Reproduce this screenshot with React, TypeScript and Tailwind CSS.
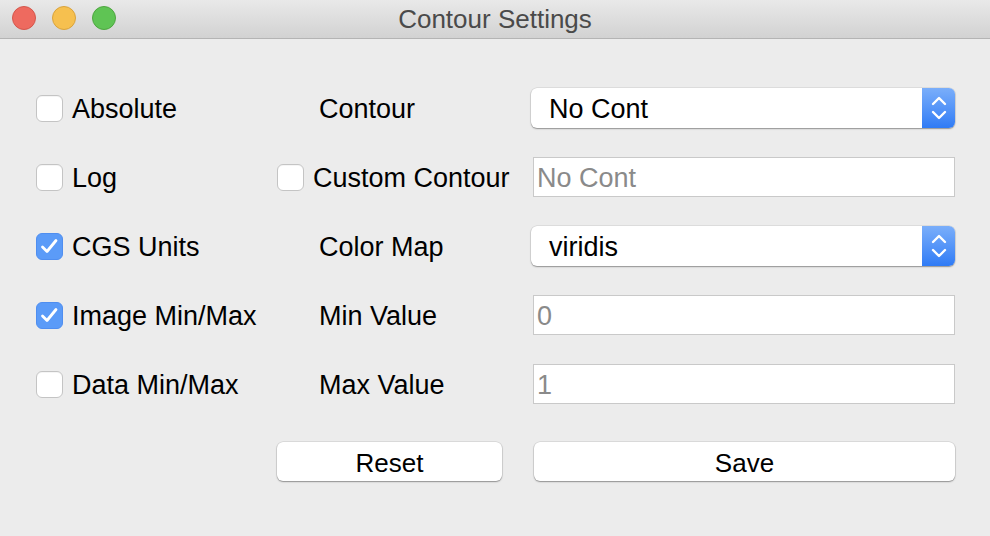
import React from 'react';

const font = { fontFamily: '"Liberation Sans", Arial, sans-serif' };

const Checkbox = ({ checked }: { checked?: boolean }) =>
  checked ? (
    <div className="w-[27px] h-[27px] rounded-[6px] bg-[#5b9bf8] border border-[#4f8ef0] flex items-center justify-center shrink-0">
      <svg width="21" height="21" viewBox="0 0 21 21" fill="none">
        <polyline points="3.5,11 8,15.5 17,4.5" stroke="white" strokeWidth="2.8" strokeLinecap="round" strokeLinejoin="round" />
      </svg>
    </div>
  ) : (
    <div className="w-[27px] h-[27px] rounded-[6px] bg-white border border-[#c4c4c4] shadow-[inset_0_1px_0_rgba(0,0,0,0.04)] shrink-0" />
  );

const CheckRow = ({ label, checked }: { label: string; checked?: boolean }) => (
  <div className="flex items-center gap-[9px] h-[40px]">
    <Checkbox checked={checked} />
    <span className="text-[27px] text-black leading-none pt-[2px]">{label}</span>
  </div>
);

const Label = ({ text }: { text: string }) => (
  <div className="flex items-center pl-[42px] pt-[2px] text-[27px] text-black leading-none">{text}</div>
);

const Select = ({ value }: { value: string }) => (
  <div className="h-[40px] w-[424px] flex rounded-[6px] bg-white shadow-[0_1px_1.5px_rgba(0,0,0,0.35),0_0_0_0.5px_rgba(0,0,0,0.12)] overflow-hidden">
    <div className="flex-1 flex items-center pl-[18px] pt-[2px] text-[27px] text-black leading-none">{value}</div>
    <div className="w-[33px] h-full bg-gradient-to-b from-[#7aaefa] to-[#2f7bf5] flex items-center justify-center">
      <svg width="18" height="28" viewBox="0 0 18 28" fill="none">
        <polyline points="3,10 9,4 15,10" stroke="white" strokeWidth="2.4" strokeLinecap="round" strokeLinejoin="round" />
        <polyline points="3,18 9,24 15,18" stroke="white" strokeWidth="2.4" strokeLinecap="round" strokeLinejoin="round" />
      </svg>
    </div>
  </div>
);

const TextField = ({ placeholder }: { placeholder: string }) => (
  <div className="h-[40px] w-[424px] pl-[2px] flex items-stretch">
    <div className="flex-1 bg-white border border-[#c9c9c9] flex items-center pl-[3px] pt-[3px] text-[27px] text-[#8a8a8a] leading-none">
      {placeholder}
    </div>
  </div>
);

const Button = ({ label, width }: { label: string; width: string }) => (
  <button
    className={`${width} h-[39px] bg-white rounded-[6px] shadow-[0_1px_1.5px_rgba(0,0,0,0.35),0_0_0_0.5px_rgba(0,0,0,0.14)] text-[26px] text-black leading-none pt-[2px] flex items-center justify-center`}
    style={font}
  >
    {label}
  </button>
);

export default function App() {
  return (
    <div className="w-[990px] h-[536px] bg-[#ececec] flex flex-col overflow-hidden" style={font}>
      {/* Title bar */}
      <div className="relative h-[39px] shrink-0 bg-gradient-to-b from-[#e9e9e9] to-[#d2d2d2] border-b border-[#b4b4b4] flex items-center justify-center">
        <div className="absolute left-[12px] top-[6px] flex gap-[16px]">
          <div className="w-[24px] h-[24px] rounded-full bg-[#ee6a5f] border border-[#d4574c]" />
          <div className="w-[24px] h-[24px] rounded-full bg-[#f6c04f] border border-[#d9a33d]" />
          <div className="w-[24px] h-[24px] rounded-full bg-[#5fc454] border border-[#4ea640]" />
        </div>
        <span className="text-[26px] text-[#4a4a4a] leading-none">Contour Settings</span>
      </div>

      {/* Body */}
      <div className="pl-[36px] pt-[49px] grid grid-cols-[241px_254px_424px] gap-y-[29px]">
        <CheckRow label="Absolute" />
        <Label text="Contour" />
        <Select value="No Cont" />

        <CheckRow label="Log" />
        <CheckRow label="Custom Contour" />
        <TextField placeholder="No Cont" />

        <CheckRow label="CGS Units" checked />
        <Label text="Color Map" />
        <Select value="viridis" />

        <CheckRow label="Image Min/Max" checked />
        <Label text="Min Value" />
        <TextField placeholder="0" />

        <CheckRow label="Data Min/Max" />
        <Label text="Max Value" />
        <TextField placeholder="1" />

        <div className="mt-[9px]" />
        <div className="mt-[9px]">
          <Button label="Reset" width="w-[225px]" />
        </div>
        <div className="mt-[9px] pl-[3px]">
          <Button label="Save" width="w-[421px]" />
        </div>
      </div>
    </div>
  );
}
